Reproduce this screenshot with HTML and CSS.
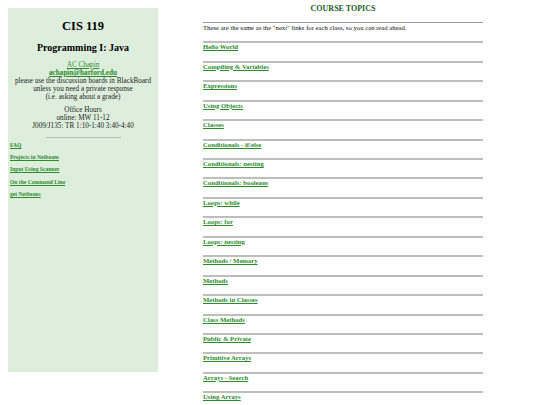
FILE: index.html
```html
<!DOCTYPE html>
<html>
<head>
<meta charset="utf-8">
<link rel="stylesheet" href="styles.css">
</head>
<body>
<div class="page">
  <div class="sidebar">
    <h1 class="course">CIS 119</h1>
    <h2 class="subtitle">Programming I: Java</h2>
    <div class="contact">
      <a class="name" href="#">AC Chapin</a><br>
      <a class="email" href="#">achapin@harford.edu</a><br>
      please use the discussion boards in BlackBoard<br>
      unless you need a private response<br>
      (i.e. asking about a grade)
    </div>
    <div class="hours">
      Office Hours<br>
      online: MW 11-12<br>
      J009/J135: TR 1:10-1:40 3:40-4:40
    </div>
    <div class="rule"></div>
    <ul class="side-links">
      <li><a href="#">FAQ</a></li>
      <li><a href="#">Projects in Netbeans</a></li>
      <li><a href="#">Input Using Scanner</a></li>
      <li><a href="#">On the Command Line</a></li>
      <li><a href="#">get Netbeans</a></li>
    </ul>
  </div>
  <div class="main">
    <div class="title">COURSE TOPICS</div>
    <div class="intro">These are the same as the "next" links for each class, so you can read ahead.</div>
    <ul class="topics">
      <li><a href="#">Hello World</a></li>
      <li><a href="#">Compiling &amp; Variables</a></li>
      <li><a href="#">Expressions</a></li>
      <li><a href="#">Using Objects</a></li>
      <li><a href="#">Classes</a></li>
      <li><a href="#">Conditionals - if/else</a></li>
      <li><a href="#">Conditionals: nesting</a></li>
      <li><a href="#">Conditionals: booleans</a></li>
      <li><a href="#">Loops: while</a></li>
      <li><a href="#">Loops: for</a></li>
      <li><a href="#">Loops: nesting</a></li>
      <li><a href="#">Methods / Memory</a></li>
      <li><a href="#">Methods</a></li>
      <li><a href="#">Methods in Classes</a></li>
      <li><a href="#">Class Methods</a></li>
      <li><a href="#">Public &amp; Private</a></li>
      <li><a href="#">Primitive Arrays</a></li>
      <li><a href="#">Arrays - Search</a></li>
      <li><a href="#">Using Arrays</a></li>
    </ul>
  </div>
</div>
</body>
</html>
```
FILE: styles.css
```css
html, body {
  margin: 0;
  padding: 0;
  background: #ffffff;
  overflow: hidden;
}
body {
  font-family: "Liberation Serif", "Times New Roman", serif;
  color: #111;
}
.page {
  display: flex;
  align-items: flex-start;
  padding: 3px 0 0 8px;
}
.sidebar {
  width: 150px;
  height: 364px;
  margin-top: 5px;
  background: #deeedd;
  box-sizing: border-box;
  text-align: center;
}
.course {
  margin: 11px 0 0;
  font-size: 12.5px;
  line-height: 14px;
  font-weight: bold;
  color: #000;
}
.subtitle {
  margin: 9px 0 0;
  font-size: 10px;
  line-height: 12px;
  font-weight: bold;
  color: #000;
}
.contact {
  margin-top: 7px;
  font-size: 7.2px;
  line-height: 8px;
  color: #222;
}
.hours {
  margin-top: 5px;
  font-size: 7.2px;
  line-height: 8px;
  color: #222;
}
a {
  color: #2c8c2c;
  text-decoration: underline;
}
.email {
  font-weight: bold;
}
.rule {
  width: 75px;
  height: 1px;
  background: #b9b9b9;
  margin: 7px auto 0;
}
.side-links {
  list-style: none;
  margin: 1px 0 0;
  padding: 0 0 0 2px;
  text-align: left;
}
.side-links li {
  font-size: 5.6px;
  line-height: 12.2px;
  font-weight: bold;
}
.main {
  width: 280px;
  margin-left: 45px;
}
.title {
  text-align: center;
  font-weight: bold;
  font-size: 8px;
  line-height: 12px;
  color: #1d5a1d;
  margin-bottom: 7px;
}
.intro {
  border-top: 1px solid #9a9a9a;
  height: 19.4px;
  box-sizing: border-box;
  font-size: 6.7px;
  line-height: 9px;
}
.topics {
  list-style: none;
  margin: 0;
  padding: 0;
}
.topics li {
  border-top: 2px solid #bdbdbd;
  height: 19.44px;
  box-sizing: border-box;
  font-size: 6.7px;
  line-height: 7px;
  font-weight: bold;
}
```
